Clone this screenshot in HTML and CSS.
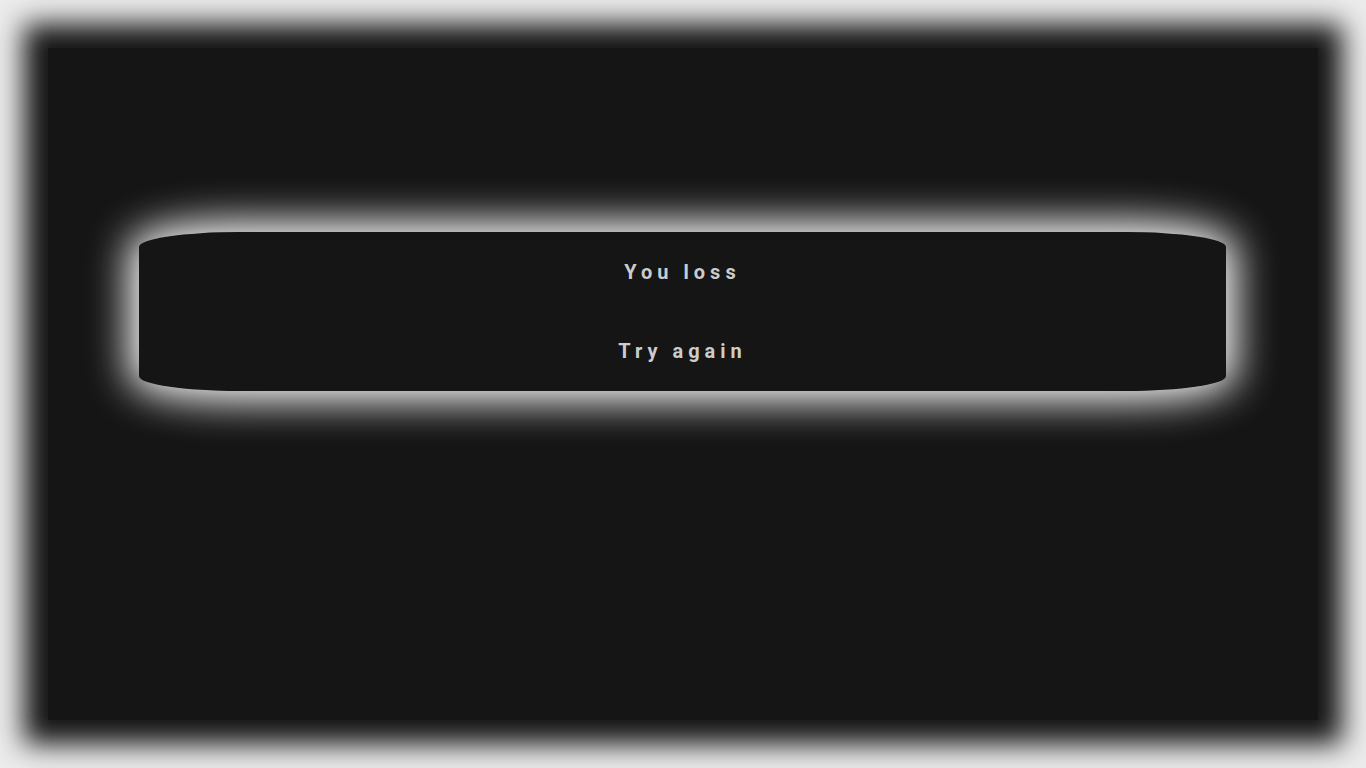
FILE: index.html
```html
<!DOCTYPE html>
<html lang="en">
<head>
<meta charset="utf-8">
<title>You loss</title>
<link rel="stylesheet" href="styles.css">
</head>
<body>
<main class="screen">
  <section class="card">
    <h2 class="msg">You loss</h2>
    <button class="msg retry" type="button">Try again</button>
  </section>
</main>
</body>
</html>
```

FILE: styles.css
```css
html, body {
  margin: 0;
  height: 100%;
}
body {
  background: #ececec;
  overflow: hidden;
  font-family: Roboto, "Liberation Sans", Arial, sans-serif;
}
.screen {
  box-sizing: border-box;
  margin: 48px;
  height: calc(100vh - 96px);
  background: #151515;
  box-shadow: 0 0 26px 24px #151515;
  padding: 184px 92px 0 91px;
}
.card {
  height: 159px;
  background: #151515;
  border-radius: 100px / 15px;
  box-shadow: 0 0 40px 10px #ffffff;
  display: flex;
  flex-direction: column;
  justify-content: space-around;
  align-items: center;
}
.msg {
  margin: 0;
  padding: 0;
  font-family: Roboto, "Liberation Sans", Arial, sans-serif;
  font-size: 20px;
  font-weight: 700;
  letter-spacing: 5px;
  color: #cccccc;
  line-height: 24px;
  background: none;
  border: none;
}
.retry {
  cursor: pointer;
}
```
